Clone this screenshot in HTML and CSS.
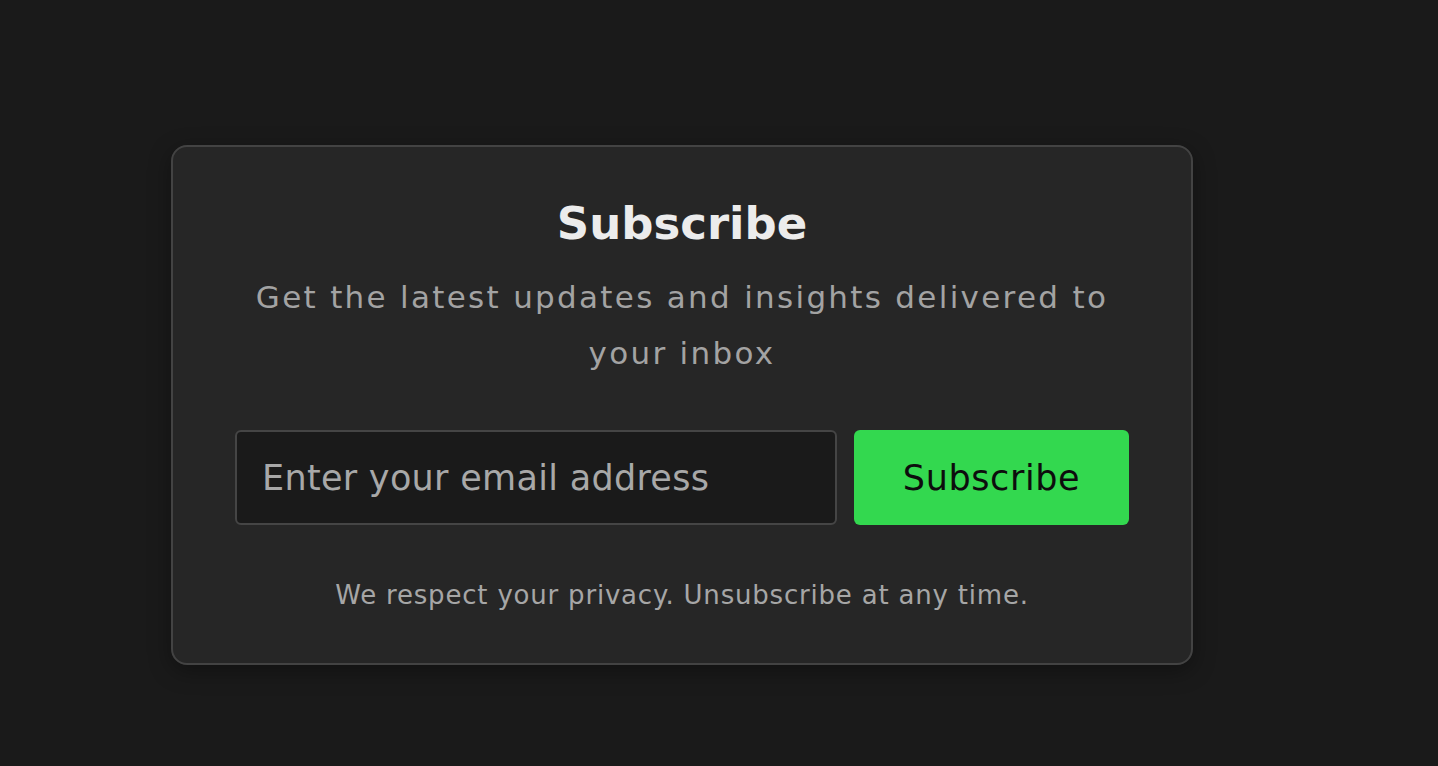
FILE: index.html
```html
<!DOCTYPE html>
<html lang="en">
<head><meta charset="UTF-8">
<meta name="viewport" content="width=device-width,initial-scale=1.0">
<title>Subscribe</title>
<link rel="stylesheet" href="styles.css">
</head>
<body>

<section class="newsletter">
  <h2 class="newsletter-title">Subscribe</h2>
  <p class="newsletter-text">Get the latest updates and insights delivered to your inbox</p>

  <form class="newsletter-form" onsubmit="return false">
    <input class="email-input" type="email" placeholder="Enter your email address">
    <button class="subscribe-btn" type="submit">Subscribe</button>
  </form>

  <p class="privacy-note">We respect your privacy. Unsubscribe at any time.</p>
</section>

</body>
</html>
```

FILE: styles.css
```css
*,*::before,*::after{box-sizing:border-box;margin:0;padding:0}
body{
  min-height:100vh;
  background:#1a1a1a;
  font-family:'DejaVu Sans','Noto Sans',sans-serif;
  padding:145px 0 0 171px;
}

/* === CARD === */
.newsletter{
  width:1022px;
  background:#262626;
  border:2px solid #434343;
  border-radius:16px;
  box-shadow:0 6px 22px rgba(0,0,0,.35);
  padding:50px 62px 53px;
  text-align:center;
}
.newsletter-title{
  font-size:45px;
  font-weight:700;
  color:#ececec;
  line-height:1.2;
}
.newsletter-text{
  font-size:31px;
  letter-spacing:2.3px;
  color:#a3a3a3;
  line-height:56px;
  max-width:890px;
  margin:18px auto 0;
}

/* === FORM === */
.newsletter-form{
  display:flex;
  gap:17px;
  max-width:898px;
  margin:49px auto 0;
}
.email-input{
  flex:1;
  height:95px;
  background:#1a1a1a;
  border:2px solid #454545;
  border-radius:6px;
  padding:0 25px;
  font-family:inherit;
  font-size:35px;
  letter-spacing:.3px;
  color:#e0e0e0;
  outline:none;
}
.email-input::placeholder{color:#a8a8a8}
.subscribe-btn{
  width:275px;
  height:95px;
  background:#33d84f;
  border:none;
  border-radius:6px;
  font-family:inherit;
  font-size:35px;
  letter-spacing:.6px;
  color:#0d0d0d;
  cursor:pointer;
}

.privacy-note{
  margin-top:55px;
  font-size:26px;
  letter-spacing:.8px;
  color:#a6a6a6;
}
```
